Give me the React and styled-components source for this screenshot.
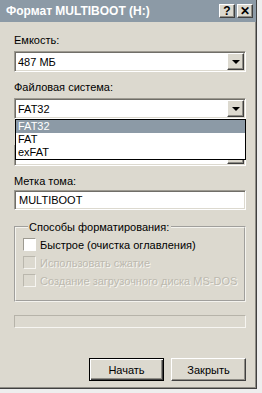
import styled, { createGlobalStyle, css } from "styled-components";

const GlobalStyle = createGlobalStyle`
  html, body {
    margin: 0;
    padding: 0;
    background: #eeeeee;
  }
  body {
    font-family: "Liberation Sans", Arial, sans-serif;
    font-size: 11px;
    color: #000;
  }
`;

const Window = styled.div`
  width: 257px;
  height: 389px;
  box-sizing: border-box;
  background: #dcd9cf;
  border-right: 1px solid #404040;
  border-bottom: 1px solid #404040;
  box-shadow: inset -1px -1px 0 #8f8d86;
  display: flex;
  flex-direction: column;
`;

const TitleBar = styled.div`
  height: 22px;
  flex: none;
  background: #8c9aa6;
  display: flex;
  align-items: center;
  padding: 0 3px 0 6px;
  gap: 2px;
`;

const Title = styled.div`
  flex: 1;
  color: #fff;
  font-weight: bold;
  font-size: 12px;
  white-space: nowrap;
`;

const raised = css`
  background: #dcd9cf;
  border: 1px solid;
  border-color: #fff #404040 #404040 #fff;
  box-shadow: inset -1px -1px 0 #8f8d86;
`;

const sunken = css`
  border: 1px solid;
  border-color: #9d9a91 #fff #fff #9d9a91;
  box-shadow: inset 1px 1px 0 #706e68, inset -1px -1px 0 #dcd9cf;
`;

const TitleButton = styled.div`
  ${raised};
  width: 16px;
  height: 14px;
  box-sizing: border-box;
  display: flex;
  align-items: center;
  justify-content: center;
  font-weight: bold;
  font-size: 12px;
  line-height: 1;
`;

const Body = styled.div`
  flex: 1;
  display: flex;
  flex-direction: column;
  padding: 12px 10px 0 14px;
`;

const Field = styled.div`
  display: flex;
  flex-direction: column;
  margin-bottom: ${(p) => p.$gap ?? 9}px;
  position: relative;
`;

const Label = styled.div`
  height: 13px;
  line-height: 13px;
  margin-bottom: ${(p) => (p.$tight ? 2 : 4)}px;
  white-space: nowrap;
`;

const Combo = styled.div`
  ${sunken};
  height: 21px;
  box-sizing: border-box;
  background: #fff;
  display: flex;
  align-items: center;
  padding: 0 1px 0 3px;
  position: relative;
`;

const ComboText = styled.div`
  flex: 1;
  white-space: nowrap;
  overflow: hidden;
`;

const ArrowButton = styled.div`
  ${raised};
  width: 17px;
  height: 17px;
  box-sizing: border-box;
  display: flex;
  align-items: center;
  justify-content: center;
`;

const Arrow = styled.div`
  width: 0;
  height: 0;
  border-left: 4px solid transparent;
  border-right: 4px solid transparent;
  border-top: 4px solid #000;
`;

const DropList = styled.div`
  position: absolute;
  left: 0;
  right: -1px;
  top: 20px;
  z-index: 2;
  background: #fff;
  border: 1px solid #000;
  display: flex;
  flex-direction: column;
`;

const DropItem = styled.div`
  height: 13px;
  line-height: 13px;
  padding-left: 2px;
  background: ${(p) => (p.$selected ? "#8c9aa6" : "#fff")};
  color: ${(p) => (p.$selected ? "#fff" : "#000")};
`;

const TextInput = styled.div`
  ${sunken};
  height: 20px;
  box-sizing: border-box;
  background: #fff;
  display: flex;
  align-items: center;
  padding-left: 4px;
`;

const Group = styled.fieldset`
  margin: 11px 0 0 0;
  padding: 5px 0 13px 7px;
  border: 2px groove #f4f3ee;
  display: flex;
  flex-direction: column;
  gap: 5px;
`;

const Legend = styled.legend`
  padding: 0 2px 0 1px;
  margin-left: 5px;
`;

const CheckRow = styled.div`
  display: flex;
  align-items: center;
  height: 13px;
  gap: 4px;
  color: ${(p) => (p.$disabled ? "#bcb9af" : "#000")};
  text-shadow: ${(p) => (p.$disabled ? "1px 1px 0 #f6f5f1" : "none")};
  white-space: nowrap;
`;

const CheckBox = styled.div`
  width: 13px;
  height: 13px;
  box-sizing: border-box;
  flex: none;
  background: ${(p) => (p.$disabled ? "#dcd9cf" : "#fff")};
  border: 1px solid;
  border-color: ${(p) =>
    p.$disabled ? "#bab7ad #f6f5f1 #f6f5f1 #bab7ad" : "#9d9a91 #fff #fff #9d9a91"};
`;

const Progress = styled.div`
  margin-top: 13px;
  height: 13px;
  box-sizing: border-box;
  border: 1px solid;
  border-color: #b6b3a9 #f6f5f1 #f6f5f1 #b6b3a9;
`;

const ButtonRow = styled.div`
  margin-top: auto;
  margin-bottom: 7px;
  display: flex;
  justify-content: flex-end;
  gap: 7px;
`;

const Button = styled.div`
  ${raised};
  width: 75px;
  height: 23px;
  box-sizing: border-box;
  display: flex;
  align-items: center;
  justify-content: center;
  ${(p) =>
    p.$default &&
    css`
      border-color: #000;
      box-shadow: inset 1px 1px 0 #fff, inset -1px -1px 0 #404040,
        inset -2px -2px 0 #8f8d86;
    `}
`;

function ComboBox({ value, children }) {
  return (
    <Combo>
      <ComboText>{value}</ComboText>
      <ArrowButton>
        <Arrow />
      </ArrowButton>
      {children}
    </Combo>
  );
}

export default function App() {
  const fsOptions = ["FAT32", "FAT", "exFAT"];
  return (
    <>
      <GlobalStyle />
      <Window>
        <TitleBar>
          <Title>Формат MULTIBOOT (H:)</Title>
          <TitleButton>?</TitleButton>
          <TitleButton>✕</TitleButton>
        </TitleBar>
        <Body>
          <Field>
            <Label>Емкость:</Label>
            <ComboBox value="487 МБ" />
          </Field>
          <Field>
            <Label>Файловая система:</Label>
            <ComboBox value="FAT32">
              <DropList>
                {fsOptions.map((o, i) => (
                  <DropItem key={o} $selected={i === 0}>
                    {o}
                  </DropItem>
                ))}
              </DropList>
            </ComboBox>
          </Field>
          {/* поле под раскрытым списком: видна только нижняя кромка */}
          <Field>
            <Label />
            <ComboBox value="" />
          </Field>
          <Field $gap={0}>
            <Label $tight>Метка тома:</Label>
            <TextInput>MULTIBOOT</TextInput>
          </Field>
          <Group>
            <Legend>Способы форматирования:</Legend>
            <CheckRow>
              <CheckBox />
              Быстрое (очистка оглавления)
            </CheckRow>
            <CheckRow $disabled>
              <CheckBox $disabled />
              Использовать сжатие
            </CheckRow>
            <CheckRow $disabled>
              <CheckBox $disabled />
              Создание загрузочного диска MS-DOS
            </CheckRow>
          </Group>
          <Progress />
          <ButtonRow>
            <Button $default>Начать</Button>
            <Button>Закрыть</Button>
          </ButtonRow>
        </Body>
      </Window>
    </>
  );
}
